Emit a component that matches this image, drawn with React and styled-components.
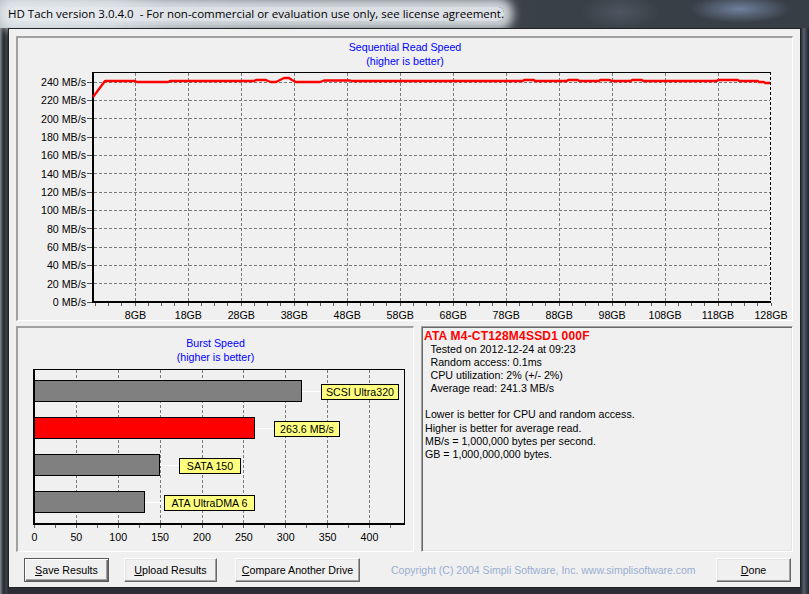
import React from 'react';
import styled, { createGlobalStyle } from 'styled-components';

const GlobalStyle = createGlobalStyle`
  html, body { margin: 0; padding: 0; background: #2b2f35; }
  body { font-family: "Liberation Sans", Arial, sans-serif; }
  * { box-sizing: border-box; }
`;

const Window = styled.div`
  width: 809px;
  height: 594px;
  display: flex;
  flex-direction: column;
  overflow: hidden;
  background:
    linear-gradient(to right, #858b93 0, #4a4f56 2px, #24282d 4px, #3d4249 6px, #2e3238 8px, transparent 8px, transparent 801px, #2c3036 801px, #56606c 804px, #3a4450 806px, #23272c 809px),
    linear-gradient(to bottom, #3a3f46 0, #2a2e34 100%);
`;

const TitleBar = styled.div`
  height: 28px;
  flex: none;
  display: flex;
  align-items: center;
  padding-left: 8px;
  background:
    radial-gradient(ellipse 50px 14px at 740px 9px, rgba(130, 150, 185, 0.75), transparent),
    radial-gradient(ellipse 40px 18px at 620px 12px, rgba(90, 100, 115, 0.6), transparent),
    linear-gradient(to right, #bcc1c7 0, #a9afb6 110px, #6b7179 165px, #4c525a 260px, #3a4047 540px, #383e46 100%);
`;

const TitleText = styled.span`
  font-family: "Open Sans", "Noto Sans", sans-serif;
  font-size: 11.5px;
  color: #000;
  white-space: pre;
  background: rgba(232, 236, 240, 0.92);
  box-shadow: 0 0 10px 9px rgba(232, 236, 240, 0.85);
  border-radius: 6px;
  line-height: 14px;
`;

const Client = styled.div`
  flex: 1;
  margin: 0 8px 6px;
  border: 1px solid #1f2328;
  background: #f0f0f0;
  display: flex;
  flex-direction: column;
  padding: 7px 7px 5px;
`;

const Sunken = styled.div`
  border-style: solid;
  border-width: 2px 1px 1px 2px;
  border-color: #a0a0a0 #ffffff #ffffff #a0a0a0;
  background: #f0f0f0;
`;

const ChartPanel = styled(Sunken)`
  height: 285px;
  flex: none;
  display: flex;
  flex-direction: column;
`;

const LowerRow = styled.div`
  height: 226px;
  flex: none;
  margin-top: 5px;
  display: flex;
  gap: 7px;
`;

const BurstPanel = styled(Sunken)`
  width: 398px;
  display: flex;
  flex-direction: column;
`;

const InfoPanel = styled.div`
  flex: 1;
  border-style: solid;
  border-width: 1px;
  border-color: #a0a0a0 #ffffff #ffffff #a0a0a0;
  box-shadow: inset 1px 1px 0 #696969, inset -1px -1px 0 #e3e3e3;
  background: #f0f0f0;
  padding: 2.5px 0 0 2px;
  font-size: 10.67px;
  line-height: 13.15px;
  color: #000;
`;

const Heading = styled.div`
  padding-top: ${(p) => p.$top}px;
  text-align: center;
  color: #0000ff;
  font-size: 10.67px;
  line-height: 14px;
  flex: none;
`;

const Plot = styled.svg`
  display: block;
  flex: none;
  text {
    font-family: "Liberation Sans", Arial, sans-serif;
    font-size: 10.67px;
    fill: #000;
  }
`;

const DriveName = styled.div`
  color: #ff0000;
  font-weight: bold;
  font-size: 12px;
  letter-spacing: 0.2px;
`;

const InfoLine = styled.div`
  padding-left: ${(p) => (p.$indent ? 6.5 : 1)}px;
  white-space: pre;
  min-height: 13.15px;
`;

const ButtonRow = styled.div`
  flex: none;
  height: 24px;
  margin-top: 6px;
  display: flex;
  align-items: center;
  padding: 0 2px 0 8px;
`;

const Button = styled.button`
  height: 24px;
  width: ${(p) => p.$w}px;
  margin-left: ${(p) => p.$ml || 0}px;
  padding: 0;
  font-family: "Liberation Sans", Arial, sans-serif;
  font-size: 10.67px;
  color: #000;
  background: #f0f0f0;
  border-style: solid;
  border-width: 1px;
  border-color: ${(p) => (p.$default ? '#5a5a5a' : '#ffffff #696969 #696969 #ffffff')};
  box-shadow: ${(p) =>
    p.$default
      ? 'inset 1px 1px 0 #ffffff, inset -1px -1px 0 #696969, inset -2px -2px 0 #a0a0a0'
      : 'inset -1px -1px 0 #a0a0a0, inset 1px 1px 0 #e3e3e3'};
  u { text-decoration: underline; }
`;

const DoneButton = styled(Button)`
  margin-left: auto;
`;

const Copyright = styled.div`
  margin-left: 31px;
  color: #9aaed0;
  font-size: 10.5px;
  white-space: nowrap;
`;

/* ---------- Sequential read chart ---------- */

const X0 = 93;
const PX_PER_GB = 5.297;
const gx = (gb) => X0 + gb * PX_PER_GB;
const gy = (v) => 302 - (v * 220) / 240;
const crisp = (v) => Math.floor(v) + 0.5;

const readLine = [
  [93, 97], [105, 81], [135, 81], [137, 82], [168, 82], [170, 81], [254, 81], [256, 80],
  [266, 80], [268, 81], [271, 82], [276, 82], [280, 80], [284, 78], [289, 78], [292, 80],
  [296, 82], [320, 82], [324, 80.5], [350, 80.5], [352, 81], [523, 81], [524, 80], [534, 80],
  [535, 81], [567, 81], [568, 80], [578, 80], [579, 81], [599, 81], [600, 80], [610, 80],
  [611, 81], [631, 81], [632, 80], [642, 80], [643, 81], [717, 81], [718, 80], [738, 80],
  [739, 81], [758, 81], [759, 82], [764, 82], [765, 83], [770, 83],
];

function SeqChart() {
  const yVals = [];
  for (let v = 0; v <= 240; v += 20) yVals.push(v);
  const xVals = [];
  for (let g = 8; g <= 128; g += 10) xVals.push(g);
  const ticks = [];
  for (let k = -3; k <= 48; k++) ticks.push(135 + k * 13.25);
  return (
    <Plot width="774" height="252" viewBox="18 68 774 252">
      {yVals.filter((v) => v > 0).map((v) => (
        <line key={'h' + v} x1="94" x2="770" y1={crisp(gy(v))} y2={crisp(gy(v))}
          stroke="#7a7a7a" strokeDasharray="3 2" />
      ))}
      {xVals.filter((g) => g < 128).map((g) => (
        <line key={'v' + g} x1={crisp(gx(g))} x2={crisp(gx(g))} y1="73" y2="301"
          stroke="#7a7a7a" strokeDasharray="3 2" />
      ))}
      <line x1="93" x2="771" y1="72.5" y2="72.5" stroke="#000" />
      <line x1="770.5" x2="770.5" y1="72" y2="302" stroke="#000" strokeDasharray="3 2" />
      {yVals.map((v) => (
        <line key={'t' + v} x1="87" x2="92" y1={crisp(gy(v))} y2={crisp(gy(v))} stroke="#505050" />
      ))}
      {ticks.map((t, i) => (
        <line key={'b' + i} x1={crisp(t)} x2={crisp(t)} y1="303" y2="306" stroke="#606060" />
      ))}
      <line x1="93" x2="93" y1="72" y2="303" stroke="#000" strokeWidth="2" />
      <line x1="92" x2="771" y1="302" y2="302" stroke="#000" strokeWidth="2" />
      <polyline points={readLine.map((p) => p.join(',')).join(' ')} fill="none"
        stroke="#ff0000" strokeWidth="2.3" strokeLinejoin="round" />
      {yVals.map((v) => (
        <text key={'yl' + v} x="86" y={gy(v) + 4} textAnchor="end">{v} MB/s</text>
      ))}
      {xVals.map((g) => (
        <text key={'xl' + g} x={gx(g)} y="319" textAnchor="middle">{g}GB</text>
      ))}
    </Plot>
  );
}

/* ---------- Burst chart ---------- */

const B0 = 34.5;
const bx = (v) => B0 + v * 0.8375;

const bars = [
  { label: 'SCSI Ultra320', value: 320, color: '#808080', y: 380, w: 77 },
  { label: '263.6 MB/s', value: 263.6, color: '#ff0000', y: 417, w: 65 },
  { label: 'SATA 150', value: 150, color: '#808080', y: 454, w: 61 },
  { label: 'ATA UltraDMA 6', value: 133, color: '#808080', y: 491, w: 90 },
];

function BurstChart() {
  const grid = [];
  for (let v = 50; v <= 400; v += 50) grid.push(v);
  const ticks = [];
  for (let v = 0; v <= 425; v += 25) ticks.push(v);
  const labels = [0, 50, 100, 150, 200, 250, 300, 350, 400];
  return (
    <Plot width="395" height="187" viewBox="18 364 395 187">
      {grid.map((v) => (
        <line key={'g' + v} x1={crisp(bx(v))} x2={crisp(bx(v))} y1="370" y2="523"
          stroke="#7a7a7a" strokeDasharray="3 2" />
      ))}
      <line x1="34" x2="405" y1="369.5" y2="369.5" stroke="#000" />
      <line x1="404.5" x2="404.5" y1="369" y2="525" stroke="#000" />
      {ticks.map((v) => (
        <line key={'t' + v} x1={crisp(bx(v))} x2={crisp(bx(v))} y1="525" y2="528" stroke="#606060" />
      ))}
      <line x1="34" x2="34" y1="369" y2="525" stroke="#000" strokeWidth="2" />
      <line x1="33" x2="405" y1="524" y2="524" stroke="#000" strokeWidth="2" />
      {bars.map((b) => {
        const end = Math.floor(bx(b.value)) - 0.5;
        const cy = b.y + 11.5;
        const lx = Math.floor(end) + 20.5;
        return (
          <g key={b.label}>
            <line x1={end} x2={lx} y1={cy} y2={cy} stroke="#ffffff" />
            <rect x="34.5" y={b.y + 0.5} width={end - 34.5} height="21" fill={b.color} stroke="#000" />
            <rect x={lx} y={b.y + 4.5} width={b.w} height="15" fill="#ffff80" stroke="#000" />
            <text x={lx + b.w / 2} y={b.y + 15.5} textAnchor="middle">{b.label}</text>
          </g>
        );
      })}
      {labels.map((v) => (
        <text key={'l' + v} x={bx(v)} y="540.5" textAnchor="middle">{v}</text>
      ))}
    </Plot>
  );
}

export default function App() {
  return (
    <>
      <GlobalStyle />
      <Window>
        <TitleBar>
          <TitleText>{'HD Tach version 3.0.4.0  - For non-commercial or evaluation use only, see license agreement.'}</TitleText>
        </TitleBar>
        <Client>
          <ChartPanel>
            <Heading $top={2}>
              Sequential Read Speed<br />(higher is better)
            </Heading>
            <SeqChart />
          </ChartPanel>
          <LowerRow>
            <BurstPanel>
              <Heading $top={8}>
                Burst Speed<br />(higher is better)
              </Heading>
              <BurstChart />
            </BurstPanel>
            <InfoPanel>
              <DriveName>ATA M4-CT128M4SSD1 000F</DriveName>
              <InfoLine $indent>Tested on 2012-12-24 at 09:23</InfoLine>
              <InfoLine $indent>Random access: 0.1ms</InfoLine>
              <InfoLine $indent>CPU utilization: 2% (+/- 2%)</InfoLine>
              <InfoLine $indent>Average read: 241.3 MB/s</InfoLine>
              <InfoLine> </InfoLine>
              <InfoLine>Lower is better for CPU and random access.</InfoLine>
              <InfoLine>Higher is better for average read.</InfoLine>
              <InfoLine>MB/s = 1,000,000 bytes per second.</InfoLine>
              <InfoLine>GB = 1,000,000,000 bytes.</InfoLine>
            </InfoPanel>
          </LowerRow>
          <ButtonRow>
            <Button $w={85} $default><u>S</u>ave Results</Button>
            <Button $w={93} $ml={15}><u>U</u>pload Results</Button>
            <Button $w={125} $ml={18}><u>C</u>ompare Another Drive</Button>
            <Copyright>Copyright (C) 2004 Simpli Software, Inc. www.simplisoftware.com</Copyright>
            <DoneButton $w={75}><u>D</u>one</DoneButton>
          </ButtonRow>
        </Client>
      </Window>
    </>
  );
}
